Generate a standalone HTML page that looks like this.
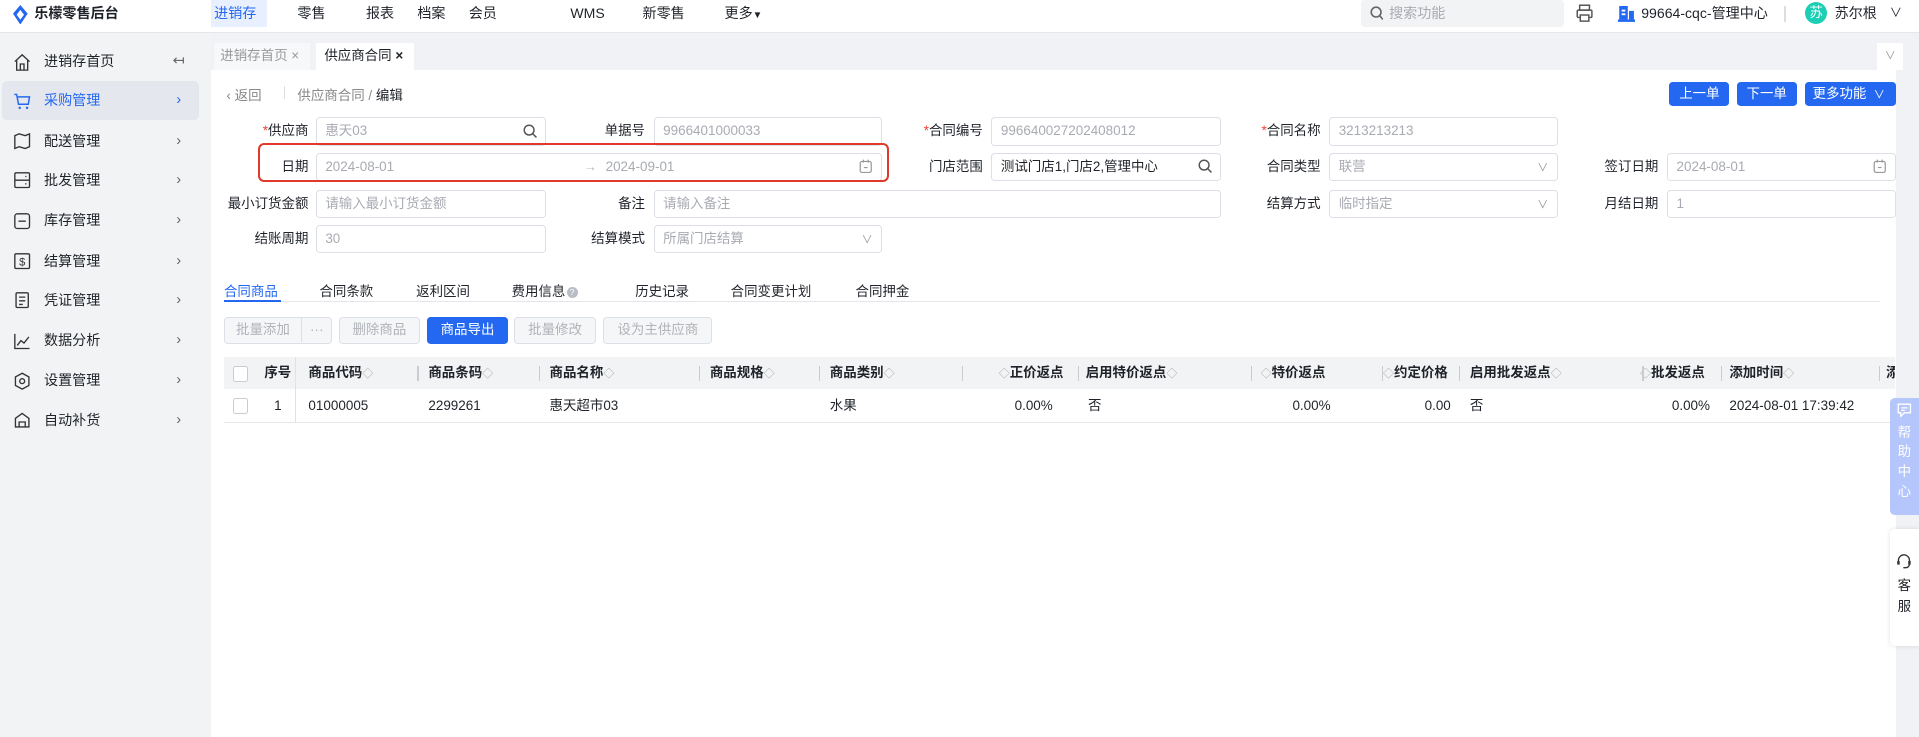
<!DOCTYPE html>
<html><head><meta charset="utf-8">
<style>
*{box-sizing:border-box;margin:0;padding:0}
html,body{width:1919px;height:737px;overflow:hidden;background:#fff}
#root{zoom:1.2239;width:1568px;height:602px;position:relative;font-family:"Liberation Sans","Noto Sans CJK SC",sans-serif;font-size:11px;color:#1f2329;overflow:hidden}
.a{position:absolute}
.hdr{left:0;top:0;width:1568px;height:27px;background:#fff;border-bottom:1px solid #e4e6eb}
.nav{top:0;height:22px;line-height:22px;font-size:11.5px;color:#1f2329}
.side{left:0;top:27px;width:172px;height:575px;background:#f2f3f5}
.si{left:0;width:172px;height:29px;line-height:29px;font-size:11.5px}
.si .t{position:absolute;left:36px}
.si .ch{position:absolute;left:144px;color:#666;font-size:12px}
.si svg{position:absolute;left:11px;top:7px}
.lbl{text-align:right;width:90px;height:23px;line-height:23px}
.lbl i{color:#f04134;font-style:normal}
.inp{height:23px;border:1px solid #dcdfe6;border-radius:3px;line-height:21px;padding-left:7px;color:#a8abb2;background:#fff}
.btn{height:22px;line-height:20px;border:1px solid #dcdfe6;border-radius:3px;color:#b0b3b8;background:#f5f6f7;text-align:center;top:259px}
.th{top:292px;height:26px;line-height:26px;font-weight:bold;color:#1f2329}
.sep{top:299px;width:1px;height:12px;background:#c9ccd1}
.td{top:318px;height:27px;line-height:27px}
.sort{color:#aaa;font-weight:normal;font-size:9px}
</style></head><body><div id="root">
<!-- header -->
<div class="a hdr"></div>
<svg class="a" style="left:11px;top:4px" width="12" height="16" viewBox="0 0 12 16"><path d="M6 0 L12 7 L6 16 L0 7Z" fill="#2468f2"/><path d="M6 4 L9 8 L6 12 L3 8Z" fill="#fff"/></svg>
<div class="a nav" style="left:28px;font-weight:bold;font-size:11.5px">乐檬零售后台</div>
<div class="a" style="left:172px;top:0;width:46px;height:22px;background:#e8efff"></div>
<div class="a nav" style="left:175px;color:#2468f2">进销存</div>
<div class="a nav" style="left:243px">零售</div>
<div class="a nav" style="left:299px">报表</div>
<div class="a nav" style="left:341px">档案</div>
<div class="a nav" style="left:383px">会员</div>
<div class="a nav" style="left:466px">WMS</div>
<div class="a nav" style="left:525px">新零售</div>
<div class="a nav" style="left:592px">更多<span style="font-size:8px">▼</span></div>
<div class="a" style="left:1112px;top:0;width:166px;height:22px;background:#f2f3f5;border-radius:3px"></div>
<svg class="a" style="left:1119px;top:5px" width="11" height="12" viewBox="0 0 11 12"><circle cx="5" cy="5" r="4" fill="none" stroke="#666" stroke-width="1.3"/><path d="M8 8 L10.5 11" stroke="#666" stroke-width="1.3"/></svg>
<div class="a nav" style="left:1135px;color:#a8abb2">搜索功能</div>
<svg class="a" style="left:1288px;top:3px" width="14" height="15" viewBox="0 0 14 15"><rect x="3" y="1" width="8" height="4" fill="none" stroke="#555" stroke-width="1.2"/><rect x="1" y="5" width="12" height="6" rx="1" fill="none" stroke="#555" stroke-width="1.2"/><rect x="3.5" y="9" width="7" height="5" fill="#fff" stroke="#555" stroke-width="1.2"/></svg>
<svg class="a" style="left:1322px;top:5px" width="14" height="13" viewBox="0 0 14 13"><rect x="1" y="0" width="7" height="11" fill="#2468f2"/><rect x="9" y="4" width="4" height="7" fill="#2468f2"/><rect x="0" y="11" width="14" height="2" fill="#2468f2"/><rect x="3" y="3" width="3" height="1.5" fill="#fff"/><rect x="3" y="6" width="3" height="1.5" fill="#fff"/></svg>
<div class="a nav" style="left:1341px">99664-cqc-管理中心</div>
<div class="a" style="left:1458px;top:5px;width:1px;height:13px;background:#ddd"></div>
<div class="a" style="left:1475px;top:2px;width:18px;height:18px;border-radius:50%;background:#1ccfb4;color:#fff;text-align:center;line-height:18px;font-size:11px">苏</div>
<div class="a nav" style="left:1499px">苏尔根</div>
<div class="a nav" style="left:1544px;font-size:10px">∨</div>
<!-- sidebar -->
<div class="a side"></div>
<div class="a" style="left:2px;top:66px;width:161px;height:32px;background:#e4e7ee;border-radius:4px"></div>
<div class="a si" style="top:36px"><svg width="15" height="15" viewBox="0 0 15 15"><path d="M1.5 7 L7.5 1.5 L13.5 7 M3 6 V14 H12 V6 M6 14 V9 H9 V14" fill="none" stroke="#333" stroke-width="1.1"/></svg><span class="t">进销存首页</span><span class="ch" style="left:141px">↤</span></div>
<div class="a si" style="top:68px;color:#2468f2"><svg width="15" height="15" viewBox="0 0 15 15"><path d="M1 2 H3 L4.5 10 H12.5 L13.5 4 H4" fill="none" stroke="#2468f2" stroke-width="1.2"/><circle cx="5.5" cy="13" r="1" fill="#2468f2"/><circle cx="11.5" cy="13" r="1" fill="#2468f2"/></svg><span class="t">采购管理</span><span class="ch" style="color:#2468f2">›</span></div>
<div class="a si" style="top:101px"><svg width="15" height="15" viewBox="0 0 15 15"><path d="M1.5 3 L5 1.5 L10 3 L13.5 1.5 V12 L10 13.5 L5 12 L1.5 13.5Z" fill="none" stroke="#333" stroke-width="1.1"/></svg><span class="t">配送管理</span><span class="ch">›</span></div>
<div class="a si" style="top:133px"><svg width="15" height="15" viewBox="0 0 15 15"><rect x="1.5" y="1.5" width="12" height="12" rx="1" fill="none" stroke="#333" stroke-width="1.1"/><path d="M1.5 7.5 H13.5 M10 4.5 H11 M10 10.5 H11" stroke="#333" stroke-width="1.1"/></svg><span class="t">批发管理</span><span class="ch">›</span></div>
<div class="a si" style="top:166px"><svg width="15" height="15" viewBox="0 0 15 15"><rect x="1.5" y="1.5" width="12" height="12" rx="2" fill="none" stroke="#333" stroke-width="1.1"/><path d="M4.5 7.5 H10.5" stroke="#333" stroke-width="1.1"/></svg><span class="t">库存管理</span><span class="ch">›</span></div>
<div class="a si" style="top:199px"><svg width="15" height="15" viewBox="0 0 15 15"><rect x="1.5" y="1.5" width="12" height="12" rx="1" fill="none" stroke="#333" stroke-width="1.1"/><text x="7.5" y="11" font-size="9" text-anchor="middle" fill="#333">$</text></svg><span class="t">结算管理</span><span class="ch">›</span></div>
<div class="a si" style="top:231px"><svg width="15" height="15" viewBox="0 0 15 15"><rect x="2.5" y="1.5" width="10" height="12" rx="1" fill="none" stroke="#333" stroke-width="1.1"/><path d="M5 5 H10 M5 8 H10 M5 11 H8" stroke="#333" stroke-width="1.1"/></svg><span class="t">凭证管理</span><span class="ch">›</span></div>
<div class="a si" style="top:264px"><svg width="15" height="15" viewBox="0 0 15 15"><path d="M1.5 1.5 V13.5 H13.5 M3.5 11 L6.5 7 L9 9 L13 4" fill="none" stroke="#333" stroke-width="1.1"/></svg><span class="t">数据分析</span><span class="ch">›</span></div>
<div class="a si" style="top:297px"><svg width="15" height="15" viewBox="0 0 15 15"><path d="M7.5 1 L13 4 V11 L7.5 14 L2 11 V4Z" fill="none" stroke="#333" stroke-width="1.1"/><circle cx="7.5" cy="7.5" r="2" fill="none" stroke="#333" stroke-width="1.1"/></svg><span class="t">设置管理</span><span class="ch">›</span></div>
<div class="a si" style="top:329px"><svg width="15" height="15" viewBox="0 0 15 15"><path d="M2 6 L7.5 2 L13 6 V13 H2Z M5 13 V9 H10 V13" fill="none" stroke="#333" stroke-width="1.1"/></svg><span class="t">自动补货</span><span class="ch">›</span></div>
<!-- tab bar -->
<div class="a" style="left:172px;top:27px;width:1396px;height:30px;background:#f0f2f5"></div>
<div class="a" style="left:175px;top:35px;width:78px;height:22px;background:#f7f8fa;color:#999;line-height:22px;padding-left:5px">进销存首页 ×</div>
<div class="a" style="left:258px;top:35px;width:80px;height:22px;background:#fff;line-height:22px;padding-left:7px">供应商合同 <b>×</b></div>
<div class="a" style="left:1534px;top:35px;width:21px;height:22px;background:#fff;color:#999;text-align:center;line-height:22px;font-size:9px">∨</div>
<div class="a" style="left:1549px;top:57px;width:19px;height:545px;background:#f0f2f5"></div>
<!-- breadcrumb -->
<div class="a" style="left:185px;top:69px;color:#888">‹ 返回</div>
<div class="a" style="left:232px;top:70px;width:1px;height:11px;background:#ddd"></div>
<div class="a" style="left:243px;top:69px;color:#888">供应商合同 / <span style="color:#1f2329">编辑</span></div>
<div class="a" style="left:1364px;top:67px;width:49px;height:20px;background:#2468f2;border-radius:3px;color:#fff;text-align:center;line-height:20px">上一单</div>
<div class="a" style="left:1419px;top:67px;width:49px;height:20px;background:#2468f2;border-radius:3px;color:#fff;text-align:center;line-height:20px">下一单</div>
<div class="a" style="left:1475px;top:67px;width:74px;height:20px;background:#2468f2;border-radius:3px;color:#fff;line-height:20px;padding-left:6px">更多功能 <span style="font-size:9px;margin-left:3px">∨</span></div>
<!-- form row1 -->
<div class="a lbl" style="left:162px;top:96px"><i>*</i>供应商</div>
<div class="a inp" style="left:258px;top:96px;width:188px">惠天03</div>
<div class="a lbl" style="left:437px;top:96px">单据号</div>
<div class="a inp" style="left:534px;top:96px;width:187px">9966401000033</div>
<div class="a lbl" style="left:713px;top:96px"><i>*</i>合同编号</div>
<div class="a inp" style="left:810px;top:96px;width:188px">996640027202408012</div>
<div class="a lbl" style="left:989px;top:96px"><i>*</i>合同名称</div>
<div class="a inp" style="left:1086px;top:96px;width:187px">3213213213</div>
<!-- row2 -->
<div class="a lbl" style="left:162px;top:125px">日期</div>
<div class="a inp" style="left:258px;top:125px;width:463px">2024-08-01<span style="position:absolute;left:218px;color:#bbb">→</span><span style="position:absolute;left:236px">2024-09-01</span></div>
<div class="a lbl" style="left:713px;top:125px">门店范围</div>
<div class="a inp" style="left:810px;top:125px;width:188px;color:#1f2329">测试门店1,门店2,管理中心</div>
<div class="a lbl" style="left:989px;top:125px">合同类型</div>
<div class="a inp" style="left:1086px;top:125px;width:187px">联营</div>
<div class="a lbl" style="left:1265px;top:125px">签订日期</div>
<div class="a inp" style="left:1362px;top:125px;width:187px">2024-08-01</div>
<div class="a" style="left:211px;top:117px;width:515px;height:32px;border:2px solid #e03a2a;border-radius:5px"></div>
<!-- row3 -->
<div class="a lbl" style="left:162px;top:155px">最小订货金额</div>
<div class="a inp" style="left:258px;top:155px;width:188px">请输入最小订货金额</div>
<div class="a lbl" style="left:437px;top:155px">备注</div>
<div class="a inp" style="left:534px;top:155px;width:464px">请输入备注</div>
<div class="a lbl" style="left:989px;top:155px">结算方式</div>
<div class="a inp" style="left:1086px;top:155px;width:187px">临时指定</div>
<div class="a lbl" style="left:1265px;top:155px">月结日期</div>
<div class="a inp" style="left:1362px;top:155px;width:187px">1</div>
<!-- row4 -->
<div class="a lbl" style="left:162px;top:184px">结账周期</div>
<div class="a inp" style="left:258px;top:184px;width:188px">30</div>
<div class="a lbl" style="left:437px;top:184px">结算模式</div>
<div class="a inp" style="left:534px;top:184px;width:187px">所属门店结算</div>
<!-- input icons -->
<svg class="a" style="left:427px;top:101px" width="12" height="12" viewBox="0 0 12 12"><circle cx="5" cy="5" r="4" fill="none" stroke="#555" stroke-width="1.2"/><path d="M8 8 L11 11" stroke="#555" stroke-width="1.2"/></svg>
<svg class="a" style="left:979px;top:130px" width="12" height="12" viewBox="0 0 12 12"><circle cx="5" cy="5" r="4" fill="none" stroke="#555" stroke-width="1.2"/><path d="M8 8 L11 11" stroke="#555" stroke-width="1.2"/></svg>
<svg class="a" style="left:702px;top:130px" width="11" height="12" viewBox="0 0 11 12"><rect x="1" y="2" width="9" height="9" rx="1.5" fill="none" stroke="#999"/><path d="M3.5 0.5 V3 M7.5 0.5 V3 M4 7 H7" stroke="#999"/></svg>
<svg class="a" style="left:1530px;top:130px" width="11" height="12" viewBox="0 0 11 12"><rect x="1" y="2" width="9" height="9" rx="1.5" fill="none" stroke="#999"/><path d="M3.5 0.5 V3 M7.5 0.5 V3 M4 7 H7" stroke="#999"/></svg>
<div class="a" style="left:1256px;top:130px;color:#999;font-size:9px">∨</div>
<div class="a" style="left:1256px;top:160px;color:#999;font-size:9px">∨</div>
<div class="a" style="left:704px;top:189px;color:#999;font-size:9px">∨</div>
<!-- tabs -->
<div class="a" style="left:183px;top:229px;color:#2468f2">合同商品</div>
<div class="a" style="left:261px;top:229px">合同条款</div>
<div class="a" style="left:340px;top:229px">返利区间</div>
<div class="a" style="left:418px;top:229px">费用信息<span style="display:inline-block;width:9px;height:9px;border-radius:50%;background:#b8bcc4;color:#fff;font-size:7px;text-align:center;line-height:9px;margin-left:1px;vertical-align:1px">?</span></div>
<div class="a" style="left:519px;top:229px">历史记录</div>
<div class="a" style="left:597px;top:229px">合同变更计划</div>
<div class="a" style="left:699px;top:229px">合同押金</div>
<div class="a" style="left:183px;top:246px;width:1353px;height:1px;background:#e4e6eb"></div>
<div class="a" style="left:183px;top:245px;width:47px;height:2px;background:#2468f2"></div>
<!-- buttons -->
<div class="a btn" style="left:183px;width:88px"><span style="position:absolute;left:0;width:62px">批量添加</span><span style="position:absolute;left:62px;top:0;width:1px;height:20px;background:#dcdfe6"></span><span style="position:absolute;left:63px;width:24px">···</span></div>
<div class="a btn" style="left:277px;width:66px">删除商品</div>
<div class="a btn" style="left:349px;width:66px;background:#2468f2;border-color:#2468f2;color:#fff">商品导出</div>
<div class="a btn" style="left:420px;width:67px">批量修改</div>
<div class="a btn" style="left:493px;width:89px">设为主供应商</div>
<!-- table -->
<div class="a" style="left:183px;top:292px;width:1365px;height:26px;background:#f2f3f5"></div>
<div class="a" style="left:183px;top:345px;width:1365px;height:1px;background:#e4e6eb"></div>
<div class="a" style="left:241px;top:292px;width:1px;height:53px;background:#e0e2e6"></div>
<div class="a" style="left:190px;top:299px;width:13px;height:13px;border:1px solid #c9ccd1;background:#fff;border-radius:2px"></div>
<div class="a" style="left:190px;top:325px;width:13px;height:13px;border:1px solid #c9ccd1;background:#fff;border-radius:2px"></div>
<div class="a th" style="left:216px">序号</div>
<div class="a th" style="left:252px">商品代码<span class="sort">◇</span></div>
<div class="a th" style="left:350px">商品条码<span class="sort">◇</span></div>
<div class="a th" style="left:449px">商品名称<span class="sort">◇</span></div>
<div class="a th" style="left:580px">商品规格<span class="sort">◇</span></div>
<div class="a th" style="left:678px">商品类别<span class="sort">◇</span></div>
<div class="a th" style="left:816px"><span class="sort">◇</span>正价返点</div>
<div class="a th" style="left:887px">启用特价返点<span class="sort">◇</span></div>
<div class="a th" style="left:1030px"><span class="sort">◇</span>特价返点</div>
<div class="a th" style="left:1130px"><span class="sort">◇</span>约定价格</div>
<div class="a th" style="left:1201px">启用批发返点<span class="sort">◇</span></div>
<div class="a th" style="left:1340px"><span class="sort">◇</span>批发返点</div>
<div class="a th" style="left:1413px">添加时间<span class="sort">◇</span></div>
<div class="a th" style="left:1541px;width:7px;overflow:hidden">添</div>
<div class="a sep" style="left:341px"></div><div class="a sep" style="left:440px"></div><div class="a sep" style="left:571px"></div><div class="a sep" style="left:669px"></div><div class="a sep" style="left:786px"></div><div class="a sep" style="left:881px"></div><div class="a sep" style="left:1022px"></div><div class="a sep" style="left:1129px"></div><div class="a sep" style="left:1192px"></div><div class="a sep" style="left:1342px"></div><div class="a sep" style="left:1406px"></div><div class="a sep" style="left:1535px"></div>
<div class="a td" style="left:224px">1</div>
<div class="a td" style="left:252px">01000005</div>
<div class="a td" style="left:350px">2299261</div>
<div class="a td" style="left:449px">惠天超市03</div>
<div class="a td" style="left:678px">水果</div>
<div class="a td" style="left:829px">0.00%</div>
<div class="a td" style="left:889px">否</div>
<div class="a td" style="left:1056px">0.00%</div>
<div class="a td" style="left:1164px">0.00</div>
<div class="a td" style="left:1201px">否</div>
<div class="a td" style="left:1366px">0.00%</div>
<div class="a td" style="left:1413px">2024-08-01 17:39:42</div>
<!-- floating -->
<div class="a" style="left:1544px;top:325px;width:24px;height:96px;background:#b4c6fc;border-radius:4px 0 0 4px;color:#fff;text-align:center;font-size:11px;line-height:16px;padding-top:4px">
<svg width="12" height="12" viewBox="0 0 12 12"><path d="M1 1 H11 V8 H6 L3 11 V8 H1Z" fill="none" stroke="#fff" stroke-width="1.1"/><path d="M3.5 4 H8.5 M3.5 6 H6.5" stroke="#fff"/></svg><br>帮<br>助<br>中<br>心</div>
<div class="a" style="left:1544px;top:432px;width:24px;height:96px;background:#fff;border-radius:4px 0 0 4px;box-shadow:0 0 4px rgba(0,0,0,.12);text-align:center;font-size:11px;line-height:17px;padding-top:20px">
<svg width="13" height="13" viewBox="0 0 13 13"><path d="M2 8 V6 A4.5 4.5 0 0 1 11 6 V8 M6 12 H8 A3 3 0 0 0 11 9" fill="none" stroke="#333" stroke-width="1.1"/><rect x="1" y="6.5" width="2" height="3" fill="#333"/><rect x="10" y="6.5" width="2" height="3" fill="#333"/></svg><br>客<br>服</div>
</div></body></html>
